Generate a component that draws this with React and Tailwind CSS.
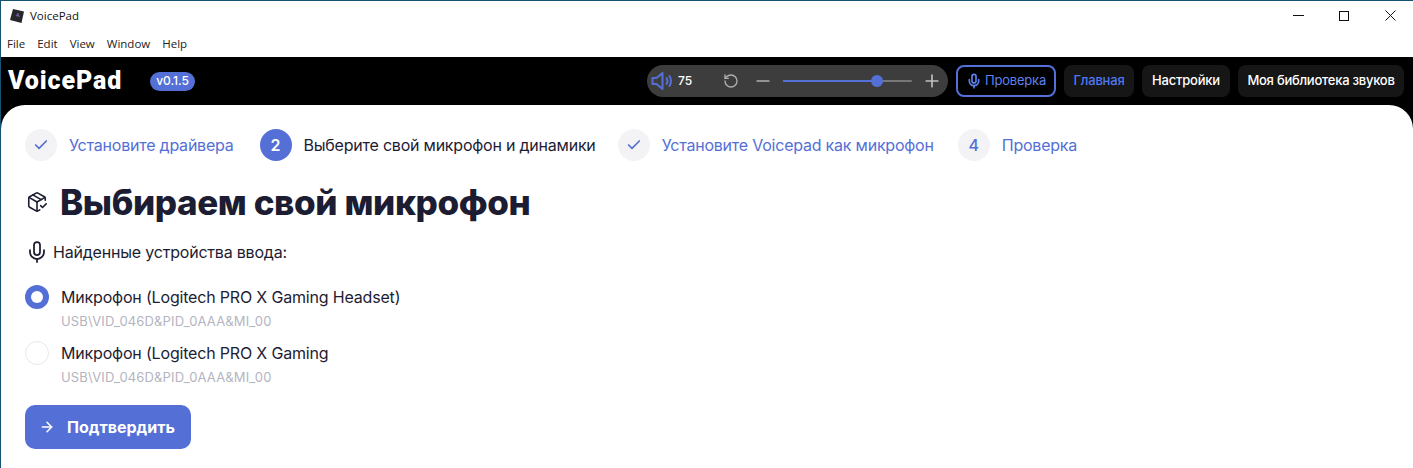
import React from "react";
import { Check, Mic, Minus, Plus, RotateCcw, ArrowRight, PackageCheck } from "lucide-react";

const menuItems = ["File", "Edit", "View", "Window", "Help"];

const Step = ({ icon, label, active, done, className }) => (
  <div className={`flex items-center gap-[12px] ${className || ""}`}>
    <div
      className={`w-[32px] h-[32px] rounded-full flex items-center justify-center text-[16px] font-medium ${
        active ? "bg-[#5470d6] text-white font-semibold" : "bg-[#f3f3f5] text-[#5470d6]"
      }`}
    >
      {done ? <Check size={16} strokeWidth={2.5} /> : icon}
    </div>
    <span className={`text-[16px] tracking-[-0.22px] whitespace-nowrap ${active ? "text-[#1c1c33]" : "text-[#5470d6]"}`}>{label}</span>
  </div>
);

const Device = ({ name, id, selected }) => (
  <div className="flex items-start gap-[12px]">
    <div
      className={`w-[24px] h-[24px] mt-[1px] rounded-full flex items-center justify-center ${
        selected ? "bg-[#5470d6]" : "border border-[#e8e8ea]"
      }`}
    >
      {selected && <div className="w-[12px] h-[12px] rounded-full bg-white" />}
    </div>
    <div>
      <div className="text-[16px] leading-[26px] tracking-[-0.18px] text-[#1c1c33] whitespace-nowrap">{name}</div>
      <div className="text-[13px] leading-[16px] mt-[3px] tracking-[0.15px] text-[#b4b4c0]">{id}</div>
    </div>
  </div>
);

export default function App() {
  return (
    <div className="w-[1413px] h-[468px] overflow-hidden flex flex-col bg-white border-t border-l border-[#175273] font-['Inter',sans-serif]">
      {/* title bar */}
      <div className="h-[29px] flex items-center justify-between shrink-0">
        <div className="flex items-center gap-[5px] pl-[8px] font-['Open_Sans',sans-serif] text-[11.5px] text-[#111]">
          <svg width="16" height="16" viewBox="0 0 16 16">
            <path d="M4 1 L15 3.5 L12.5 15 L1 12 Z" fill="#26262c" />
            <path d="M6.5 8 L9 4.5 L11 9 Z" fill="#6a5a90" />
          </svg>
          <span>VoicePad</span>
        </div>
        <div className="flex items-center">
          <div className="w-[46px] flex justify-center">
            <svg width="11" height="11" viewBox="0 0 11 11"><path d="M0 5.5 H11" stroke="#111" strokeWidth="1" /></svg>
          </div>
          <div className="w-[46px] flex justify-center">
            <svg width="10" height="10" viewBox="0 0 10 10"><rect x="0.5" y="0.5" width="9" height="9" fill="none" stroke="#111" strokeWidth="1" /></svg>
          </div>
          <div className="w-[46px] flex justify-center">
            <svg width="11" height="11" viewBox="0 0 11 11"><path d="M0.5 0.5 L10.5 10.5 M10.5 0.5 L0.5 10.5" stroke="#111" strokeWidth="1" /></svg>
          </div>
        </div>
      </div>

      {/* menu bar */}
      <div className="h-[27px] flex items-center gap-[12px] pl-[6px] shrink-0 font-['Open_Sans',sans-serif] text-[11.5px] text-[#222]">
        {menuItems.map((m) => (
          <span key={m}>{m}</span>
        ))}
      </div>

      {/* app header */}
      <div className="h-[48px] bg-black flex items-center shrink-0 pl-[7px] pr-[9px]">
        <span className="text-white text-[25px] font-black tracking-[0.9px] font-['Roboto',sans-serif]">VoicePad</span>
        <span className="ml-[28px] h-[19px] px-[6px] rounded-full bg-[#5470d6] text-white text-[12px] font-medium flex items-center">v0.1.5</span>

        <div className="ml-auto flex items-center gap-[8px]">
          <div className="w-[301px] h-[32px] rounded-full bg-[#3d3d3d] flex items-center pl-[3px] pr-[6px]">
            <svg width="25" height="22" viewBox="0 0 24 22" fill="none" stroke="#5470d6" strokeWidth="2">
              <path d="M2 8 H6 L12 3 V19 L6 14 H2 Z" strokeLinejoin="round" />
              <path d="M16 8 Q18 11 16 14" strokeLinecap="round" />
              <path d="M19 6 Q22 11 19 16" strokeLinecap="round" />
            </svg>
            <span className="ml-[3px] text-white text-[12px] font-medium">75</span>
            <RotateCcw size={16} strokeWidth={2} className="ml-[31px] text-[#b0b0b0]" />
            <Minus size={20} strokeWidth={2} className="ml-[14px] text-[#b0b0b0]" />
            <div className="ml-[10px] flex-1 relative h-[2px] bg-[#777] rounded-full">
              <div className="h-full w-[73%] bg-[#5470d6] rounded-full" />
              <div className="absolute left-[73%] top-1/2 -translate-x-1/2 -translate-y-1/2 w-[12px] h-[12px] rounded-full bg-[#5470d6]" />
            </div>
            <Plus size={20} strokeWidth={2} className="ml-[10px] text-[#c0c0c0]" />
          </div>

          <div className="h-[32px] w-[100px] rounded-[8px] border-2 border-[#5470d6] flex items-center justify-center gap-[3px] text-[#5f80ee] text-[13px] tracking-[-0.2px]">
            <Mic size={16} strokeWidth={2.5} />
            <span>Проверка</span>
          </div>
          <div className="h-[32px] w-[70px] rounded-[8px] bg-[#161616] flex items-center justify-center text-[#4f78f0] text-[13px] font-medium tracking-[-0.2px]">Главная</div>
          <div className="h-[32px] w-[88px] rounded-[8px] bg-[#161616] flex items-center justify-center text-white text-[13px] font-medium tracking-[-0.2px]">Настройки</div>
          <div className="h-[32px] w-[166px] rounded-[8px] bg-[#161616] flex items-center justify-center text-white text-[13px] font-medium tracking-[-0.25px]">Моя библиотека звуков</div>
        </div>
      </div>

      {/* content */}
      <div className="flex-1 bg-black">
        <div className="h-full bg-white rounded-t-[24px] pt-[24px] pl-[24px]">
          <div className="flex items-center">
            <Step done label="Установите драйвера" />
            <Step active icon="2" label="Выберите свой микрофон и динамики" className="ml-[26px]" />
            <Step done label="Установите Voicepad как микрофон" className="ml-[22px]" />
            <Step icon="4" label="Проверка" className="ml-[24px]" />
          </div>

          <div className="flex items-center gap-[12px] mt-[19px] pl-[1px]">
            <PackageCheck size={22} strokeWidth={1.75} className="text-[#1c1c33]" />
            <h1 className="text-[35px] leading-[44px] font-extrabold tracking-[-0.4px] text-[#1c1c33] whitespace-nowrap">Выбираем свой микрофон</h1>
          </div>

          <div className="flex items-center gap-[4px] mt-[16px]">
            <Mic size={24} strokeWidth={1.75} className="text-[#1c1c33]" />
            <span className="text-[16px] tracking-[-0.2px] text-[#1c1c33]">Найденные устройства ввода:</span>
          </div>

          <div className="flex flex-col gap-[11px] mt-[20px]">
            <Device selected name="Микрофон (Logitech PRO X Gaming Headset)" id="USB\VID_046D&PID_0AAA&MI_00" />
            <Device name="Микрофон (Logitech PRO X Gaming" id="USB\VID_046D&PID_0AAA&MI_00" />
          </div>

          <button className="mt-[20px] w-[166px] h-[44px] rounded-[10px] bg-[#5470d6] text-white flex items-center pl-[14px] gap-[12px] text-[16px] font-bold">
            <ArrowRight size={16} strokeWidth={2.25} />
            <span>Подтвердить</span>
          </button>
        </div>
      </div>
    </div>
  );
}
